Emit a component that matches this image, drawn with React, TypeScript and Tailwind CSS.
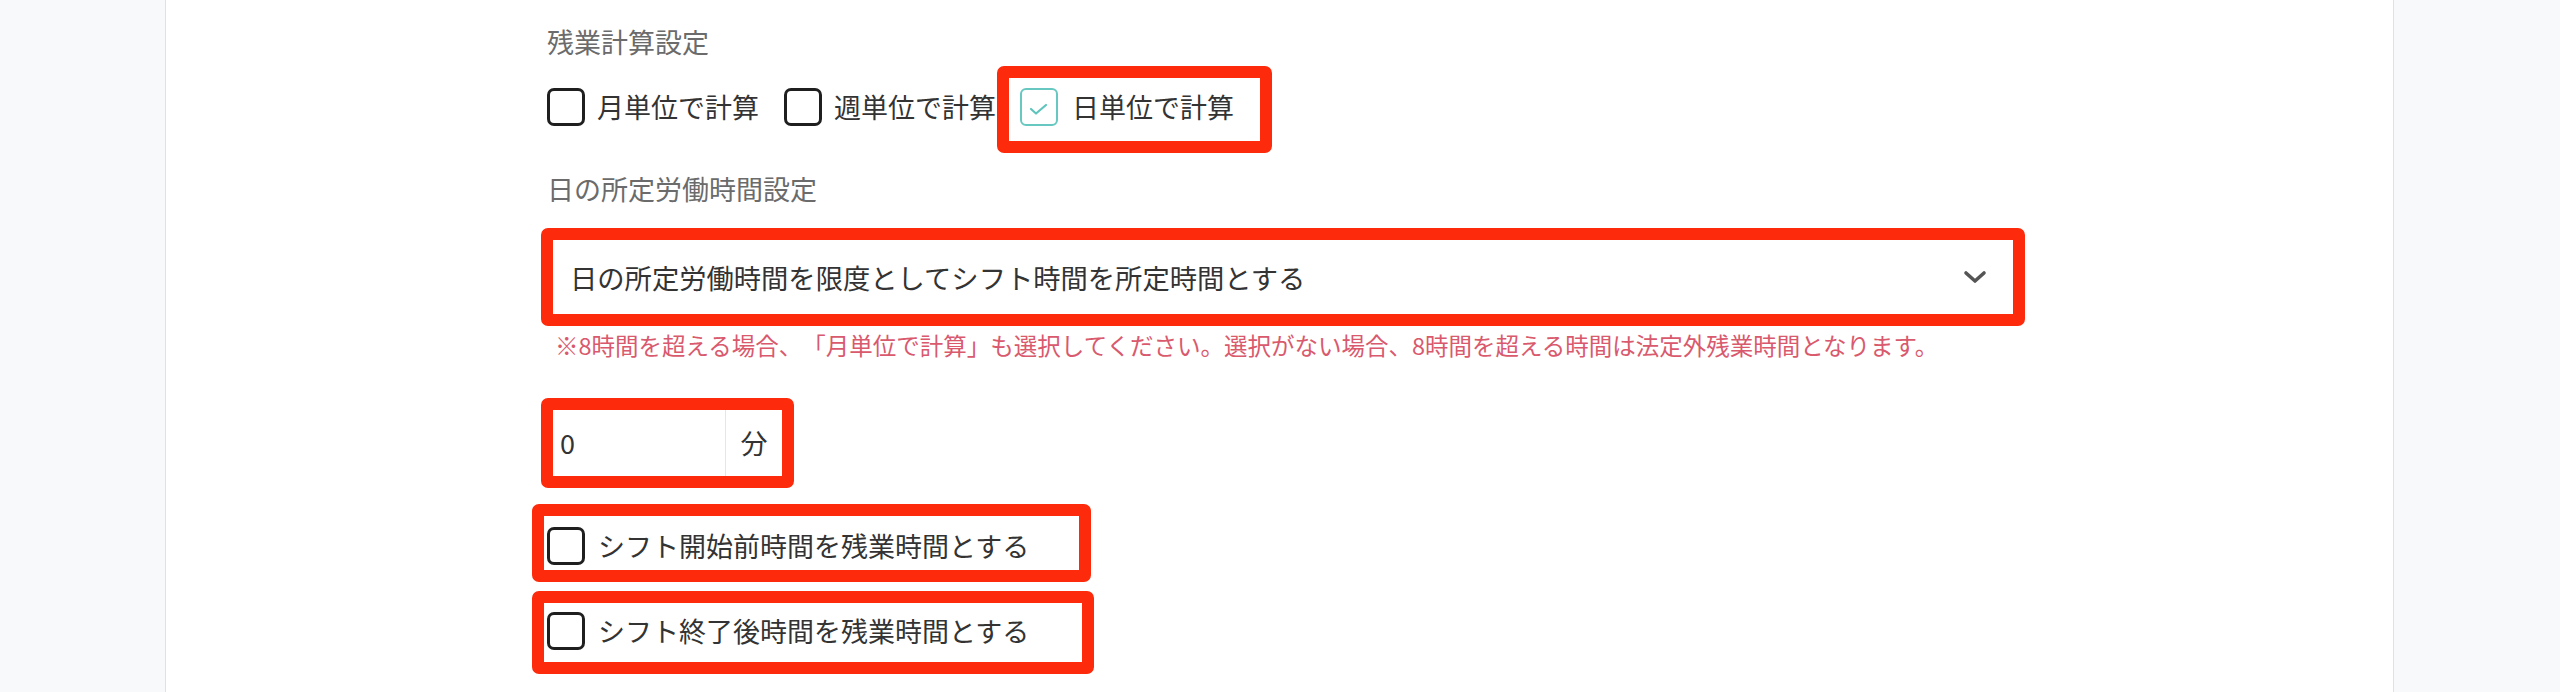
import React from "react";

const font = { fontFamily: '"Noto Sans CJK JP", "Noto Sans", sans-serif' };

function RedBox({ className }: { className: string }) {
  return (
    <div
      className={`pointer-events-none absolute rounded-[7px] border-[12px] border-[#fd2b0b] ${className}`}
    />
  );
}

function Box({ checked = false }: { checked?: boolean }) {
  if (checked) {
    return (
      <span className="flex h-[38px] w-[38px] shrink-0 items-center justify-center rounded-[6px] border-[2px] border-[#67c8c1] bg-white">
        <svg width="38" height="38" viewBox="0 0 38 38" className="-m-[2px]">
          <polyline
            points="11,21 16,25.5 26,17"
            fill="none"
            stroke="#5fc4bd"
            strokeWidth="2.2"
            strokeLinecap="round"
            strokeLinejoin="round"
          />
        </svg>
      </span>
    );
  }
  return (
    <span className="block h-[38px] w-[38px] shrink-0 rounded-[7px] border-[3px] border-[#1f1f1f] bg-white" />
  );
}

export default function App() {
  return (
    <div className="flex h-[692px] w-full bg-[#f8f9fb] [text-spacing-trim:space-all]" style={font}>
      <div className="w-[165px] shrink-0" />
      <div className="h-full w-[2229px] shrink-0 border-x border-[#e1e1e3] bg-white pl-[381px] pt-[22px]">
        <div className="text-[27px] leading-[40px] text-[#6b6b6b]">残業計算設定</div>

        <div className="mt-[25px] flex h-[40px] items-center text-[27px] text-[#333]">
          <label className="flex items-center">
            <Box />
            <span className="ml-[12px] leading-[40px]">月単位で計算</span>
          </label>
          <label className="ml-[25px] flex items-center">
            <Box />
            <span className="ml-[12px] leading-[40px]">週単位で計算</span>
          </label>
          <label className="relative ml-[24px] flex items-center">
            <Box checked />
            <span className="ml-[14px] leading-[40px]">日単位で計算</span>
            <RedBox className="-bottom-[26px] -left-[23px] -right-[38px] -top-[21px]" />
          </label>
        </div>

        <div className="mt-[42px] text-[27px] leading-[40px] text-[#6b6b6b]">日の所定労働時間設定</div>

        <div className="relative mt-[27px] flex h-[82px] w-[1472px] items-center justify-between rounded-[4px] border border-[#dcdcdc] pl-[22px] pr-[31px] text-[27.3px] text-[#333]">
          <span className="leading-[40px]">日の所定労働時間を限度としてシフト時間を所定時間とする</span>
          <svg width="24" height="14" viewBox="0 0 24 14">
            <polyline
              points="3,3 12,11 21,3"
              fill="none"
              stroke="#555"
              strokeWidth="3.6"
              strokeLinecap="round"
              strokeLinejoin="round"
            />
          </svg>
          <RedBox className="-bottom-[9px] -left-[7px] -right-[7px] -top-[9px]" />
        </div>

        <div className="ml-[8px] mt-[11px] text-[23.5px] leading-[32px] text-[#d9596d]">
          ※8時間を超える場合、「月単位で計算」も選択してください。選択がない場合、8時間を超える時間は法定外残業時間となります。
        </div>

        <div className="relative mt-[46px] flex h-[72px] w-[236px] rounded-[4px] border border-[#e3e3e3] text-[27px] text-[#333]">
          <div className="flex w-[177px] items-center pl-[12px] leading-[40px]">0</div>
          <div className="flex flex-1 items-center justify-center border-l border-[#e6e6e6] leading-[40px]">分</div>
          <RedBox className="-bottom-[10px] -left-[7px] -right-[12px] -top-[10px]" />
        </div>

        <div className="mt-[47px] flex h-[40px] items-center text-[27px] text-[#333]">
          <label className="relative flex items-center">
            <Box />
            <span className="ml-[13px] leading-[40px]">シフト開始前時間を残業時間とする</span>
            <RedBox className="-bottom-[16px] -left-[15px] -right-[62px] -top-[22px]" />
          </label>
        </div>

        <div className="mt-[45px] flex h-[40px] items-center text-[27px] text-[#333]">
          <label className="relative flex items-center">
            <Box />
            <span className="ml-[13px] leading-[40px]">シフト終了後時間を残業時間とする</span>
            <RedBox className="-bottom-[23px] -left-[15px] -right-[65px] -top-[20px]" />
          </label>
        </div>
      </div>
    </div>
  );
}
